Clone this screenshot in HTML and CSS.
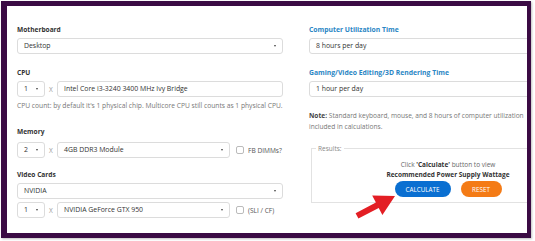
FILE: index.html
```html
<!DOCTYPE html>
<html lang="en">
<head>
  <meta charset="UTF-8">
  <title>PSU Calculator</title>
  <link rel="stylesheet" href="styles.css">
</head>
<body>

  <div class="frame">
    <div class="calc">

      <div class="col">
        <div class="label">Motherboard</div>
        <div class="box select">Desktop</div>

        <div class="label gap">CPU</div>
        <div class="row">
          <div class="box select qty">1</div>
          <span class="x">X</span>
          <div class="box wide">Intel Core i3-3240 3400 MHz Ivy Bridge</div>
        </div>
        <p class="help">CPU count: by default it's 1 physical chip. Multicore CPU still counts as 1 physical CPU.</p>

        <div class="label gap2">Memory</div>
        <div class="row">
          <div class="box select qty">2</div>
          <span class="x">X</span>
          <div class="box select mid">4GB DDR3 Module</div>
          <span class="check"></span>
          <span class="check-text">FB DIMMs?</span>
        </div>

        <div class="label gap3">Video Cards</div>
        <div class="box select">NVIDIA</div>
        <div class="row tight">
          <div class="box select qty">1</div>
          <span class="x">X</span>
          <div class="box select mid">NVIDIA GeForce GTX 950</div>
          <span class="check"></span>
          <span class="check-text">(SLI / CF)</span>
        </div>
      </div>

      <div class="col right">
        <div class="label blue">Computer Utilization Time</div>
        <div class="box">8 hours per day</div>

        <div class="label blue gap">Gaming/Video Editing/3D Rendering Time</div>
        <div class="box">1 hour per day</div>

        <p class="note"><b>Note:</b> Standard keyboard, mouse, and 8 hours of computer utilization<br>included in calculations.</p>

        <fieldset class="results">
          <legend>Results:</legend>
          <p class="hint">Click <b>'Calculate'</b> button to view</p>
          <p class="hint strong">Recommended Power Supply Wattage</p>
          <div class="buttons">
            <button class="btn calc-btn">CALCULATE</button>
            <button class="btn reset-btn">RESET</button>
          </div>
        </fieldset>
      </div>

    </div>
  </div>

  <!-- red pointer arrow drawn over the page -->
  <svg class="arrow" width="50" height="32" viewBox="350 190 50 32">
    <polygon fill="#e31e24" points="355.6,213.3 375.9,202.6 372.2,195.6 395,196 382.4,215 378.7,208 358.4,218.6"/>
  </svg>

</body>
</html>
```

FILE: styles.css
```css
* {
  margin: 0;
  padding: 0;
  box-sizing: border-box;
}

body {
  font-family: "Open Sans", Arial, sans-serif;
  background-color: #fff;
  width: 535px;
  height: 241px;
  overflow: hidden;
  position: relative;
  color: #333;
}

.frame {
  margin: 1px 0 0 1px;
  width: 530px;
  height: 237px;
  border-style: solid;
  border-color: #3b0b44;
  border-width: 5px 4px 5px 6px;
  background: #fff;
  overflow: hidden;
  box-shadow: 1px 1px 2px rgba(0, 0, 0, 0.25);
}

.calc {
  display: grid;
  grid-template-columns: 266px 276px;
  column-gap: 26px;
  padding: 20px 0 0 10px;
}

.label {
  font-size: 6.6px;
  font-weight: 700;
  line-height: 8px;
  color: #333;
  margin-bottom: 4px;
  white-space: nowrap;
}

.label.blue {
  color: #2a86c4;
  font-size: 6.8px;
}

.gap {
  margin-top: 15px;
}

.gap2 {
  margin-top: 18px;
  margin-bottom: 6px;
}

.gap3 {
  margin-top: 13px;
}

.box {
  height: 16px;
  border: 1px solid #dcdcdc;
  border-radius: 3px;
  font-size: 6.9px;
  line-height: 14px;
  padding: 0 6px;
  color: #333;
  white-space: nowrap;
  overflow: hidden;
  position: relative;
  background: #fff;
}

.select::after {
  content: "";
  position: absolute;
  right: 6px;
  top: 6px;
  border-left: 1.5px solid transparent;
  border-right: 1.5px solid transparent;
  border-top: 2.5px solid #444;
}

.row {
  display: flex;
  align-items: center;
}

.row.tight {
  margin-top: 3px;
}

.qty {
  width: 28px;
  flex: none;
}

.x {
  width: 12px;
  text-align: center;
  font-size: 6.5px;
  color: #999;
}

.wide {
  flex: 1;
}

.mid {
  width: 173px;
  flex: none;
}

.check {
  width: 8px;
  height: 8px;
  border: 1px solid #bbb;
  border-radius: 2px;
  margin-left: 6px;
  flex: none;
}

.check-text {
  font-size: 6.6px;
  color: #555;
  margin-left: 4px;
  white-space: nowrap;
}

.help {
  font-size: 6.7px;
  line-height: 8px;
  color: #777;
  margin-top: 5px;
  white-space: nowrap;
}

.note {
  font-size: 6.6px;
  line-height: 11px;
  color: #777;
  margin-top: 13px;
  white-space: nowrap;
}

.note b {
  color: #444;
}

.results {
  width: 274px;
  margin-top: 12px;
  margin-left: 2px;
  border: 1px solid #e2e2e2;
  padding: 7px 0 5px;
  text-align: center;
}

.results legend {
  font-size: 6.5px;
  color: #888;
  padding: 0 2px;
  margin-left: 4px;
  text-align: left;
}

.hint {
  font-size: 6.5px;
  line-height: 10px;
  color: #666;
}

.hint b,
.hint.strong {
  color: #333;
  font-weight: 700;
}

.buttons {
  display: flex;
  justify-content: center;
  gap: 10px;
  margin-top: 1px;
}

.btn {
  height: 16px;
  border: none;
  border-radius: 8px;
  color: #fff;
  font-family: "Open Sans", Arial, sans-serif;
  font-size: 6.3px;
}

.calc-btn {
  width: 56px;
  background-color: #0a6fd1;
}

.reset-btn {
  width: 41px;
  background-color: #f47b16;
}

.arrow {
  position: absolute;
  left: 350px;
  top: 190px;
}
```
